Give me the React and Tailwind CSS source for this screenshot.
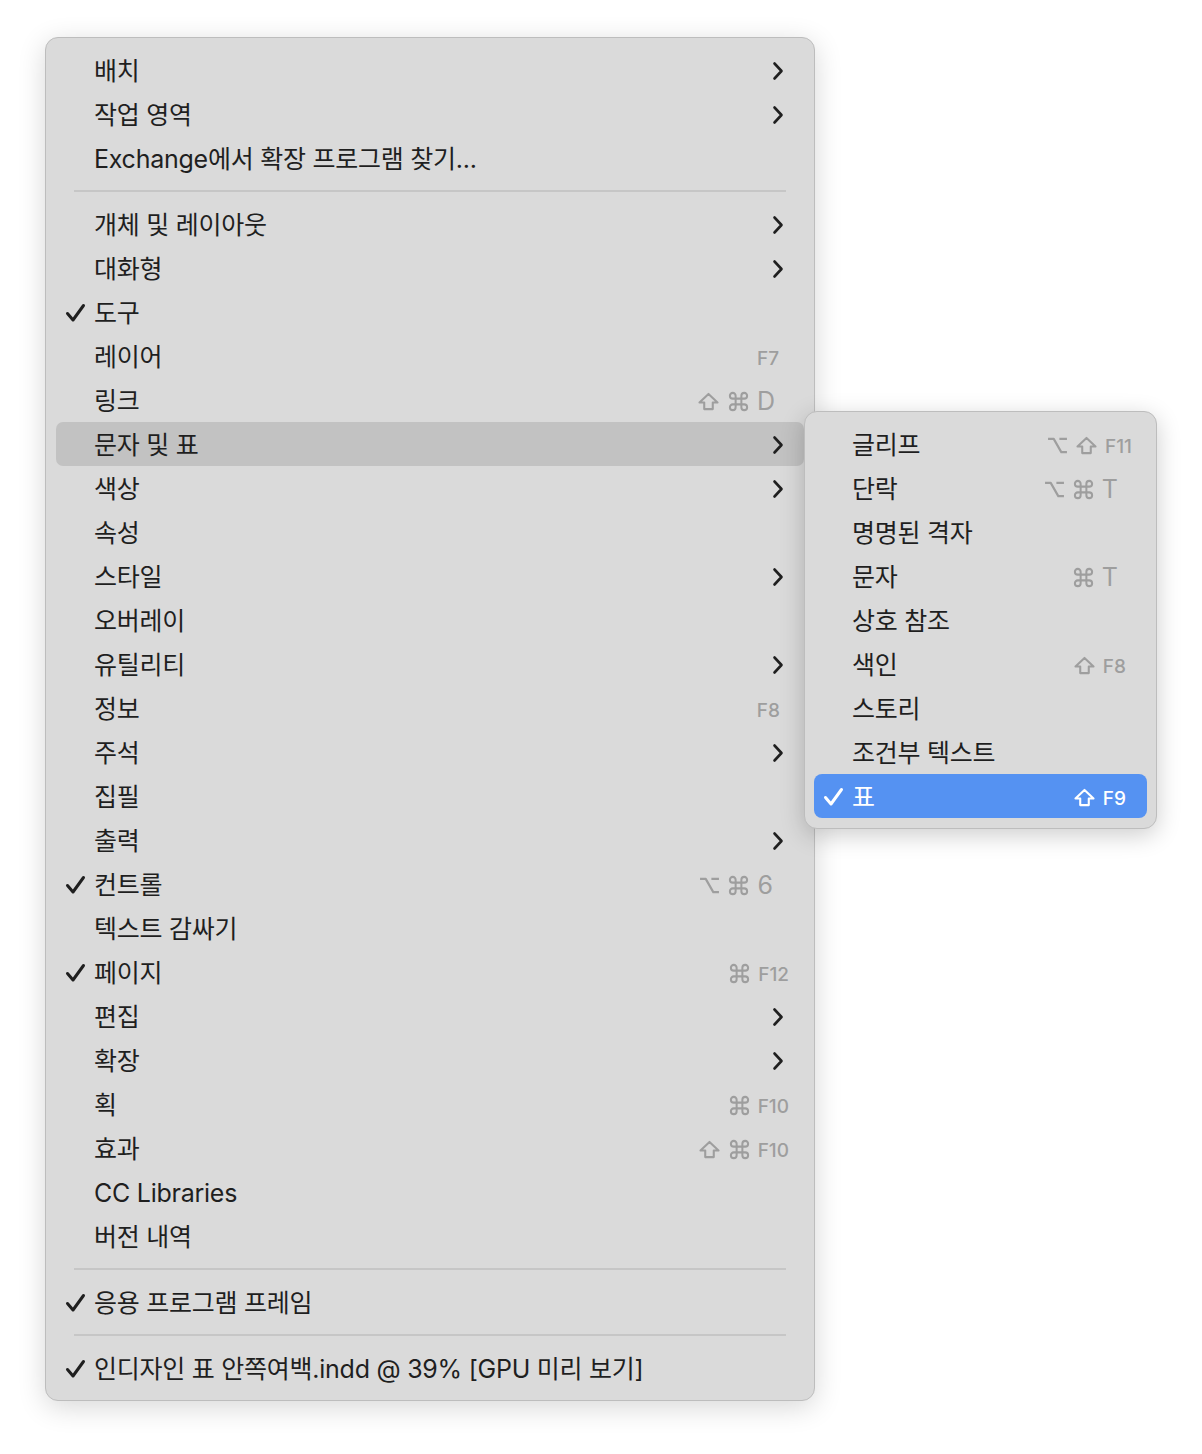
import React from "react";
import { Command } from "lucide-react";

const FONT = { fontFamily: '"Inter", "Noto Sans CJK KR", sans-serif' };

const Check = ({ white }) => (
  <svg width="21" height="20" viewBox="0 0 21 20" fill="none">
    <path d="M2.5 10.5 L8 17 L18.5 2.5" stroke={white ? "#fff" : "#1f1f1f"} strokeWidth="3" strokeLinecap="round" strokeLinejoin="round" />
  </svg>
);

const Chevron = () => (
  <svg width="12" height="20" viewBox="0 0 12 20" fill="none">
    <path d="M2.5 2.5 L9.5 10 L2.5 17.5" stroke="#1f1f1f" strokeWidth="2.6" strokeLinecap="round" strokeLinejoin="round" />
  </svg>
);

const ShiftKey = ({ color }) => (
  <svg width="23" height="19" viewBox="0 0 24 20" fill="none">
    <path d="M12 2 L21.5 11 H16.5 V18 H7.5 V11 H2.5 Z" stroke={color} strokeWidth="2.2" strokeLinejoin="round" />
  </svg>
);

const OptKey = ({ color }) => (
  <svg width="21" height="17" viewBox="0 0 22 18" fill="none">
    <path d="M1 2 H7 L15 16 H21 M13 2 H21" stroke={color} strokeWidth="2.3" strokeLinejoin="round" />
  </svg>
);

// shortcut: list of tokens, "opt" | "shift" | "cmd" | text
function Shortcut({ keys, white }) {
  const col = white ? "#ffffff" : "#9e9e9e";
  return (
    <div className="flex items-center gap-[7px]" style={{ color: col }}>
      {keys.map((k, i) => {
        if (k === "opt") return <OptKey key={i} color={col} />;
        if (k === "shift") return <ShiftKey key={i} color={col} />;
        if (k === "cmd") return <Command key={i} size={23} strokeWidth={2.1} color={col} />;
        const isF = k.startsWith("F");
        return (
          <span key={i} className={isF ? "text-[19px] font-medium leading-none pt-[2px]" : "text-[25px] leading-none"}>{k}</span>
        );
      })}
    </div>
  );
}

const MAIN = [
  [
    { t: "배치", sub: true },
    { t: "작업 영역", sub: true },
    { t: "Exchange에서 확장 프로그램 찾기..." },
  ],
  [
    { t: "개체 및 레이아웃", sub: true },
    { t: "대화형", sub: true },
    { t: "도구", check: true },
    { t: "레이어", keys: ["F7"], pr: "pr-[25px]" },
    { t: "링크", keys: ["shift", "cmd", "D"], pr: "pr-[29px]" },
    { t: "문자 및 표", sub: true, active: true },
    { t: "색상", sub: true },
    { t: "속성" },
    { t: "스타일", sub: true },
    { t: "오버레이" },
    { t: "유틸리티", sub: true },
    { t: "정보", keys: ["F8"], pr: "pr-[24px]" },
    { t: "주석", sub: true },
    { t: "집필" },
    { t: "출력", sub: true },
    { t: "컨트롤", check: true, keys: ["opt", "cmd", "6"], pr: "pr-[31px]" },
    { t: "텍스트 감싸기" },
    { t: "페이지", check: true, keys: ["cmd", "F12"], pr: "pr-[15px]" },
    { t: "편집", sub: true },
    { t: "확장", sub: true },
    { t: "획", keys: ["cmd", "F10"], pr: "pr-[15px]" },
    { t: "효과", keys: ["shift", "cmd", "F10"], pr: "pr-[15px]" },
    { t: "CC Libraries" },
    { t: "버전 내역" },
  ],
  [{ t: "응용 프로그램 프레임", check: true }],
  [{ t: "인디자인 표 안쪽여백.indd @ 39% [GPU 미리 보기]", check: true }],
];

const SUB = [
  { t: "글리프", keys: ["opt", "shift", "F11"], pr: "pr-[15px]" },
  { t: "단락", keys: ["opt", "cmd", "T"], pr: "pr-[29px]" },
  { t: "명명된 격자" },
  { t: "문자", keys: ["cmd", "T"], pr: "pr-[29px]" },
  { t: "상호 참조" },
  { t: "색인", keys: ["shift", "F8"], pr: "pr-[21px]" },
  { t: "스토리" },
  { t: "조건부 텍스트" },
  { t: "표", check: true, keys: ["shift", "F9"], pr: "pr-[21px]", blue: true },
];

function Row({ item }) {
  const bg = item.blue ? "bg-[#5592f2] rounded-[8px]" : item.active ? "bg-[#c2c2c2] rounded-[7px]" : "";
  return (
    <div className={`relative h-[44px] flex items-center pl-[38px] ${bg}`}>
      {item.check && (
        <div className="absolute left-[9px] top-[13px]">
          <Check white={item.blue} />
        </div>
      )}
      <span className={`flex-1 pt-[3px] text-[25px] tracking-[-0.25px] whitespace-nowrap ${item.blue ? "text-white" : "text-[#1f1f1f]"}`}>{item.t}</span>
      {item.sub && (
        <div className="pr-[20px] pt-[2px] flex items-center">
          <Chevron />
        </div>
      )}
      {item.keys && (
        <div className={`pt-[2px] ${item.pr}`}>
          <Shortcut keys={item.keys} white={item.blue} />
        </div>
      )}
    </div>
  );
}

export default function App() {
  return (
    <div className="min-h-screen bg-white pl-[45px] pt-[37px]" style={FONT}>
      <div className="relative w-[770px]">
        <div className="w-[770px] rounded-[13px] bg-[#dadada] border border-[#bdbdbd] px-[10px] py-[10px] shadow-[0_6px_28px_rgba(0,0,0,0.16)]">
          {MAIN.map((group, gi) => (
            <div key={gi}>
              {gi > 0 && (
                <div className="h-[22px] flex items-center px-[18px]">
                  <div className="h-[2px] w-full bg-[#c6c6c6]" />
                </div>
              )}
              {group.map((it, i) => (
                <Row key={i} item={it} />
              ))}
            </div>
          ))}
        </div>
        <div className="absolute left-[759px] top-[374px] w-[353px] rounded-[13px] bg-[#dadada] border border-[#bdbdbd] px-[9px] py-[10px] shadow-[0_6px_24px_rgba(0,0,0,0.2)]">
          {SUB.map((it, i) => (
            <Row key={i} item={it} />
          ))}
        </div>
      </div>
    </div>
  );
}
